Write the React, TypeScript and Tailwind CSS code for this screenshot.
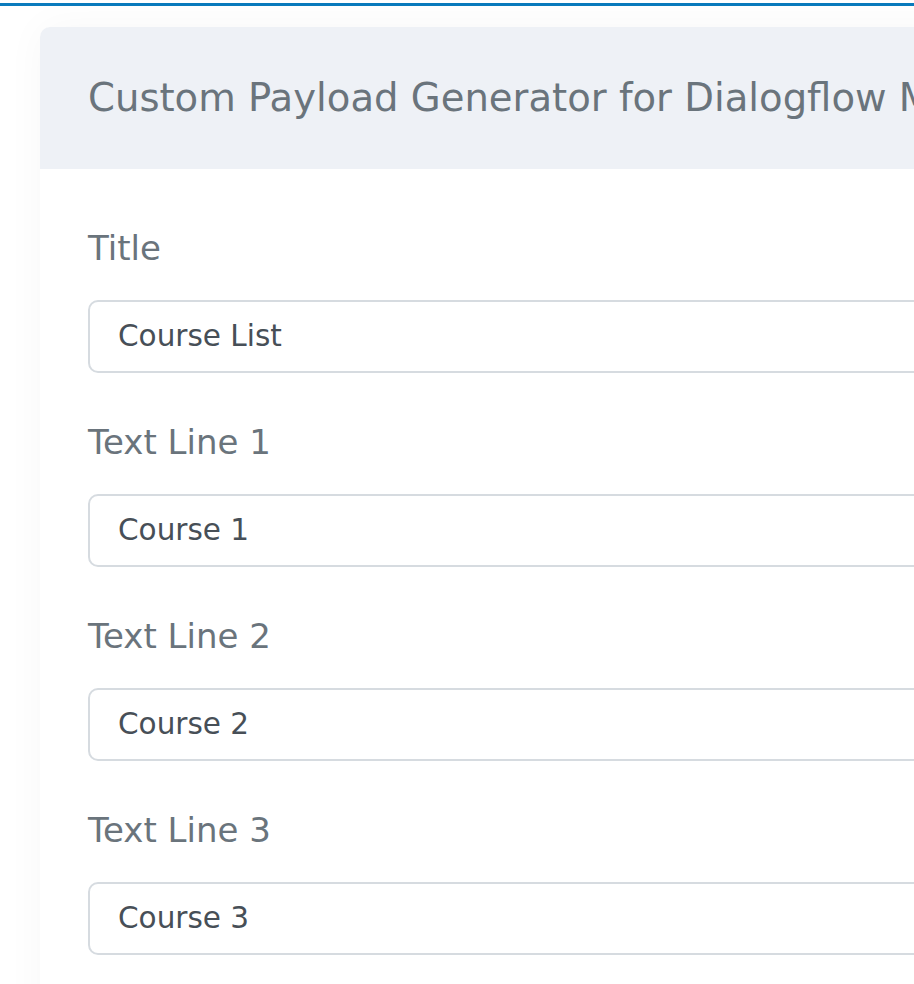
import React from "react";

const fields = [
  { label: "Title", value: "Course List" },
  { label: "Text Line 1", value: "Course 1" },
  { label: "Text Line 2", value: "Course 2" },
  { label: "Text Line 3", value: "Course 3" },
];

export default function App() {
  return (
    <div
      className="w-[914px] h-[984px] overflow-hidden bg-white"
      style={{ fontFamily: '"DejaVu Sans", "Noto Sans", sans-serif' }}
    >
      <div className="mt-[3px] h-[3px] bg-[#0a7bbd]" />
      <div className="ml-[40px] mt-[21px] w-[1300px] rounded-[10px] bg-white shadow-[0_0_40px_rgba(0,0,0,0.035)] overflow-hidden">
        <div className="h-[142px] bg-[#eef1f6] px-[48px] flex items-center">
          <h1 className="text-[38.6px] leading-none text-[#6a747c] font-normal whitespace-nowrap">
            Custom Payload Generator for Dialogflow Messenger
          </h1>
        </div>
        <div className="pt-[52px] pl-[48px] pr-[48px] pb-[40px]">
          {fields.map((f) => (
            <div key={f.label} className="mb-[42px]">
              <label className="block h-[54px] leading-[54px] text-[34px] text-[#6a747c]">
                {f.label}
              </label>
              <div className="mt-[25px] h-[73px] rounded-[10px] border-2 border-[#d6dbe0] bg-white flex items-center pl-[28px]">
                <span className="text-[29.5px] text-[#474f57] whitespace-nowrap">{f.value}</span>
              </div>
            </div>
          ))}
        </div>
      </div>
    </div>
  );
}
